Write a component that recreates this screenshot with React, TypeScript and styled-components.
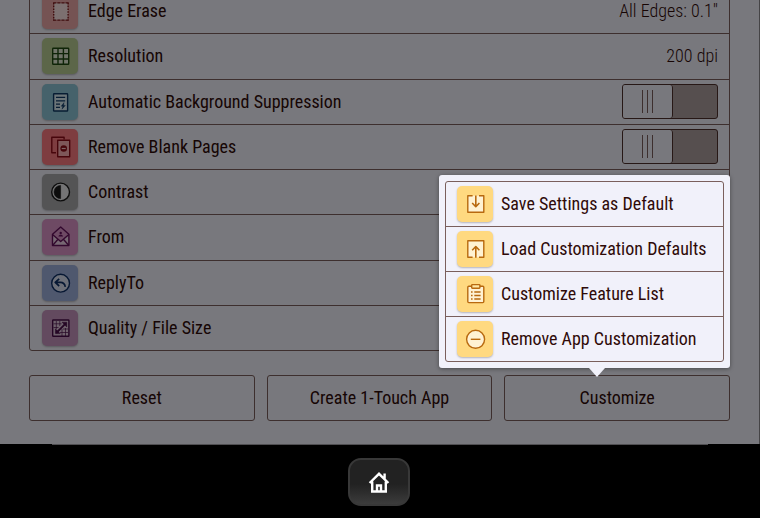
import React from "react";
import styled, { createGlobalStyle } from "styled-components";

const INK = "#2f0a08";
const LINE = "#7a5f5c";
const SURFACE = "#f1f1fa";

const GlobalStyle = createGlobalStyle`
  * { box-sizing: border-box; }
  body {
    margin: 0;
    background: #000;
    font-family: "Roboto Condensed", "Liberation Sans Narrow", Roboto, sans-serif;
    font-size: 18px;
    line-height: 24px;
    color: ${INK};
  }
  button { font: inherit; color: inherit; cursor: pointer; }
`;

const Page = styled.div`
  display: grid;
  grid-template-rows: minmax(0, 1fr) auto;
  height: 100vh;
  overflow: hidden;
`;

const Main = styled.main`
  position: relative;
  display: flex;
  flex-direction: column;
  justify-content: flex-end;
  gap: 24px;
  min-height: 0;
  padding: 0 29px 23px;
  background: ${SURFACE};
  border-right: 1px solid #8a888c;
`;

const Backdrop = styled.div`
  position: absolute;
  inset: 0 -1px 0 0;
  background: rgba(0, 0, 0, 0.5);
`;

const FeatureList = styled.ul`
  display: grid;
  grid-template-rows: repeat(8, 1fr);
  flex: none;
  height: 364px;
  margin: 0;
  padding: 0;
  list-style: none;
  border: 1px solid ${LINE};
  border-radius: 3px;
`;

const FeatureRow = styled.li`
  display: flex;
  align-items: center;
  gap: 10px;
  padding: 0 11px 0 12px;
  min-height: 0;
  & + & { border-top: 1px solid ${LINE}; }
`;

const Tile = styled.span<{ $fill: string; $ink: string }>`
  flex: none;
  width: 36px;
  height: 36px;
  border-radius: 5px;
  background: ${(p) => p.$fill};
  color: ${(p) => p.$ink};
  box-shadow: 0 1px 2px rgba(0, 0, 0, 0.25);
  svg { display: block; width: 36px; height: 36px; }
`;

const Label = styled.span`
  flex: 1;
  white-space: nowrap;
`;

const Value = styled.span`
  font-weight: 300;
`;

const Switch = styled.label`
  display: grid;
  width: 96px;
  height: 35px;
  border: 1px solid #4e302d;
  border-radius: 3px;
  background: #ac9f9f;
  overflow: hidden;
  input {
    grid-area: 1 / 1;
    appearance: none;
    width: 100%;
    height: 100%;
    margin: 0;
  }
`;

const Thumb = styled.span`
  grid-area: 1 / 1;
  display: flex;
  align-items: center;
  justify-content: center;
  gap: 4px;
  width: 50px;
  border-right: 1px solid #4e302d;
  border-radius: 0 3px 3px 0;
  background: ${SURFACE};
  i { width: 1px; height: 23px; background: #7a5f5c; }
`;

const Actions = styled.div`
  display: grid;
  grid-template-columns: repeat(3, 1fr);
  gap: 12px;
  flex: none;
`;

const ActionCell = styled.div`
  position: relative;
  display: grid;
`;

const ActionButton = styled.button`
  height: 46px;
  padding: 0 12px;
  background: none;
  border: 1px solid ${LINE};
  border-radius: 3px;
`;

const Popover = styled.div`
  position: absolute;
  z-index: 2;
  right: 0;
  bottom: calc(100% + 7px);
  width: 291px;
  padding: 6px;
  background: ${SURFACE};
  border-radius: 3px;
  box-shadow: 0 1px 4px rgba(0, 0, 0, 0.4);
`;

const Pointer = styled.svg`
  position: absolute;
  top: 100%;
  right: 125px;
  width: 16px;
  height: 9px;
`;

const MenuList = styled.ul`
  margin: 0;
  padding: 0;
  list-style: none;
  border: 1px solid ${LINE};
  border-radius: 3px;
  li + li { border-top: 1px solid ${LINE}; }
`;

const MenuButton = styled.button`
  display: flex;
  align-items: center;
  gap: 8px;
  width: 100%;
  height: 44px;
  padding: 0 11px;
  border: 0;
  background: none;
  text-align: left;
`;

const Dock = styled.footer`
  display: flex;
  flex-direction: column;
  align-items: center;
  height: 74px;
  background: #000;
`;

const DockEdge = styled.div`
  align-self: stretch;
  height: 1px;
  margin: 0 52px;
  background: #504f52;
`;

const HomeButton = styled.button`
  display: grid;
  place-items: center;
  width: 62px;
  height: 48px;
  margin: 13px 2px 0 0;
  padding: 0;
  border: 2px solid #383838;
  border-radius: 13px;
  background: linear-gradient(#222 55%, #3c3c3c);
  svg { width: 24px; height: 24px; }
`;

function Svg({ children }: { children: React.ReactNode }) {
  return (
    <svg viewBox="0 0 36 36" fill="none" stroke="currentColor" strokeWidth="1.4" strokeLinejoin="round" aria-hidden="true">
      {children}
    </svg>
  );
}

const EdgeIcon = () => (
  <Svg>
    <rect x="12" y="10" width="14" height="17" fill="#fff" fillOpacity=".65" stroke="none" />
    <path d="M11.2 9.9h15.4M11.2 27.1h15.4" strokeDasharray="3.2 .9" />
    <path d="M11.7 9.8v17.8M26.1 9.8v17.8" strokeDasharray="1.6 1.2" />
  </Svg>
);
const GridIcon = () => (
  <Svg>
    <rect x="10.7" y="10.3" width="16" height="16" rx=".6" fill="#fff" fillOpacity=".6" />
    <path d="M16 10.3v16M21.4 10.3v16M10.7 15.6h16M10.7 21h16" />
  </Svg>
);
const SuppressIcon = () => (
  <Svg>
    <rect x="11.6" y="9.7" width="14" height="17.3" rx=".6" fill="#fff" fillOpacity=".65" />
    <path d="M14 13.4h9.2M14 16.8h9.2M14 20.2h4M14 23.4h4" strokeWidth="1.2" />
    <path d="M22 18.6l-2.8 3.6h1.6l-.8 3 3.3-3.8h-1.7z" fill="currentColor" strokeWidth=".4" />
  </Svg>
);
const BlankIcon = () => (
  <Svg>
    <path d="M14 23.8H9.8V8.2h12.3v2.3" />
    <rect x="15.7" y="11.3" width="12" height="16.4" fill="#fff" fillOpacity=".4" />
    <circle cx="21.7" cy="19.5" r="3.3" fill="currentColor" stroke="none" />
    <path d="M19.7 19.5h4" stroke="#ffc9cc" strokeWidth="1.2" />
  </Svg>
);
const ContrastIcon = () => (
  <Svg>
    <circle cx="18.6" cy="18" r="8.9" fill="#fff" fillOpacity=".75" />
    <path d="M18.6 11.4a6.6 6.6 0 0 0 0 13.2z" fill="currentColor" strokeWidth=".6" />
  </Svg>
);
const FromIcon = () => (
  <Svg>
    <path d="M10.5 15.5v11h16.4v-11l-8.2 7z" fill="#fff" fillOpacity=".55" stroke="none" />
    <path d="M10.5 15.3v11.2h16.4V15.3L18.7 8z" />
    <path d="M10.5 15.5l8.2 7 8.2-7M10.8 26.3l5.2-6M26.6 26.3l-5.2-6" />
    <circle cx="18.7" cy="14" r="1.2" fill="currentColor" stroke="none" />
    <path d="M16.3 17.6c.4-2.4 4.4-2.4 4.8 0z" fill="currentColor" stroke="none" />
  </Svg>
);
const ReplyIcon = () => (
  <Svg>
    <circle cx="18.6" cy="18.2" r="8.9" fill="#fff" fillOpacity=".6" />
    <path d="M17.2 13.8l-4 3.6 4 3.6M13.5 17.4h5c2.4 0 4.2 1.4 4.8 4.4" strokeWidth="1.7" />
  </Svg>
);
const QualityIcon = () => (
  <Svg>
    <rect x="10.7" y="10" width="16.2" height="16.2" rx=".5" fill="#fff" fillOpacity=".45" />
    <path d="M11.5 13.8h8M11.5 17.5h5M14.3 11v8M17.8 11v5M18 22.5h8M21 19h5M20 19v7M23.5 18v8" strokeWidth=".7" />
    <path d="M14.2 23l9.6-9.6" strokeWidth="1.8" />
    <path d="M20 12.2h4.8V17zM13.4 18.8v4.8h4.8z" fill="currentColor" strokeWidth=".5" />
  </Svg>
);
const SaveIcon = () => (
  <Svg>
    <path d="M11 9.7h15.6v16.6H11z" fill="#fff" fillOpacity=".65" stroke="none" />
    <path d="M15.6 9.7H10.8v16.6h16V9.7H22" />
    <path d="M18.8 9.5v11.2M15.2 17l3.6 3.7 3.6-3.7" strokeWidth="1.6" />
  </Svg>
);
const LoadIcon = () => (
  <Svg>
    <path d="M11 9.7h15.6v16.6H11z" fill="#fff" fillOpacity=".65" stroke="none" />
    <path d="M15.6 26.3H10.8V9.7h16v16.6H22" />
    <path d="M18.8 26.8V15.6M15.2 19.2l3.6-3.7 3.6 3.7" strokeWidth="1.6" />
  </Svg>
);
const ClipboardIcon = () => (
  <Svg>
    <rect x="10.8" y="10.3" width="16" height="16.3" rx="1" fill="#fff" fillOpacity=".65" />
    <rect x="14.7" y="8.6" width="8.2" height="3.6" rx=".6" fill="#ffe9a6" />
    <path d="M17.3 16h6.3M17.3 19.5h6.3M17.3 23h6.3" />
    <path d="M14 16h1.6M14 19.5h1.6M14 23h1.6" />
  </Svg>
);
const MinusIcon = () => (
  <Svg>
    <circle cx="18.6" cy="18.3" r="9" fill="#fff" fillOpacity=".65" />
    <path d="M13.8 18.3h9.6" />
  </Svg>
);

interface Feature {
  label: string;
  fill: string;
  ink: string;
  icon: React.ReactNode;
  value?: string;
  toggle?: boolean;
}

const features: Feature[] = [
  { label: "Edge Erase", fill: "#eaa6a6", ink: "#7e1a1c", icon: <EdgeIcon />, value: 'All Edges: 0.1"' },
  { label: "Resolution", fill: "#b9cd92", ink: "#1f4a10", icon: <GridIcon />, value: "200 dpi" },
  { label: "Automatic Background Suppression", fill: "#8cc4d6", ink: "#0e3a66", icon: <SuppressIcon />, toggle: true },
  { label: "Remove Blank Pages", fill: "#fc7a80", ink: "#8f0d18", icon: <BlankIcon />, toggle: true },
  { label: "Contrast", fill: "#a8a8aa", ink: "#1a1a1a", icon: <ContrastIcon /> },
  { label: "From", fill: "#dc95c9", ink: "#65115c", icon: <FromIcon /> },
  { label: "ReplyTo", fill: "#9fb0dd", ink: "#0d2f66", icon: <ReplyIcon /> },
  { label: "Quality / File Size", fill: "#c695be", ink: "#4a0d4a", icon: <QualityIcon /> },
];

const menu = [
  { label: "Save Settings as Default", icon: <SaveIcon /> },
  { label: "Load Customization Defaults", icon: <LoadIcon /> },
  { label: "Customize Feature List", icon: <ClipboardIcon /> },
  { label: "Remove App Customization", icon: <MinusIcon /> },
];

export default function App() {
  return (
    <Page>
      <GlobalStyle />
      <Main>
        <FeatureList>
          {features.map((f) => (
            <FeatureRow key={f.label}>
              <Tile $fill={f.fill} $ink={f.ink}>{f.icon}</Tile>
              <Label>{f.label}</Label>
              {f.value && <Value>{f.value}</Value>}
              {f.toggle && (
                <Switch>
                  <input type="checkbox" role="switch" aria-label={f.label} />
                  <Thumb><i /><i /><i /></Thumb>
                </Switch>
              )}
            </FeatureRow>
          ))}
        </FeatureList>
        <Actions>
          <ActionButton>Reset</ActionButton>
          <ActionButton>Create 1-Touch App</ActionButton>
          <ActionCell>
            <ActionButton aria-haspopup="menu" aria-expanded="true">Customize</ActionButton>
            <Popover>
              <MenuList>
                {menu.map((m) => (
                  <li key={m.label}>
                    <MenuButton>
                      <Tile $fill="#ffd980" $ink="#b8690f">{m.icon}</Tile>
                      <Label>{m.label}</Label>
                    </MenuButton>
                  </li>
                ))}
              </MenuList>
              <Pointer viewBox="0 0 16 9" aria-hidden="true">
                <path d="M0 0h16L8 9z" fill={SURFACE} />
              </Pointer>
            </Popover>
          </ActionCell>
        </Actions>
        <Backdrop />
      </Main>
      <Dock>
        <DockEdge />
        <HomeButton aria-label="Home">
          <svg viewBox="0 0 24 24" fill="none" stroke="#fff" strokeWidth="2.4" aria-hidden="true">
            <path d="M2.6 13L12 3.8l9.4 9.2M5.2 11.5v10h13.6v-10M17.6 9V3.5M10 21.5v-6h4v6" />
          </svg>
        </HomeButton>
      </Dock>
    </Page>
  );
}
